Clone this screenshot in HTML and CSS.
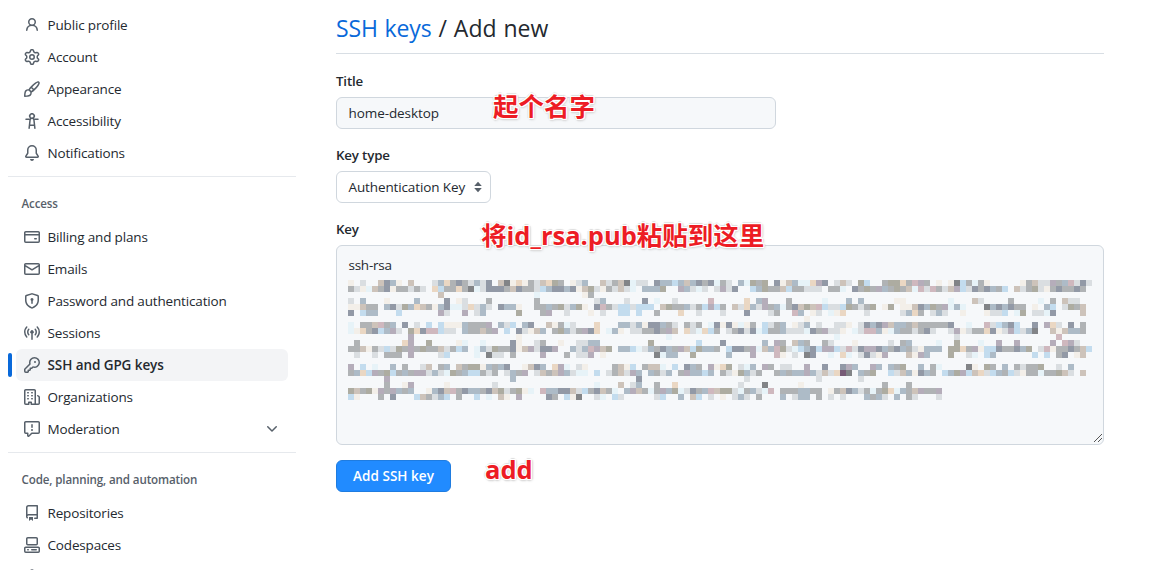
FILE: index.html
```html
<!DOCTYPE html>
<html lang="en">
<head>
<meta charset="utf-8">
<title>SSH keys</title>
<link rel="stylesheet" href="styles.css">
</head>
<body>
<div class="page">
<nav class="sidebar">
  <ul class="group">
    <li class="item"><svg class="icon" viewBox="0 0 16 16"><path d="M10.561 8.073a6.005 6.005 0 0 1 3.432 5.142.75.75 0 1 1-1.498.07 4.5 4.5 0 0 0-8.99 0 .75.75 0 0 1-1.498-.07 6.004 6.004 0 0 1 3.431-5.142 3.999 3.999 0 1 1 5.123 0ZM10.5 5a2.5 2.5 0 1 0-5 0 2.5 2.5 0 0 0 5 0Z"/></svg><span>Public profile</span></li>
    <li class="item"><svg class="icon" viewBox="0 0 16 16"><path d="M8 0a8.2 8.2 0 0 1 .701.031C9.444.095 9.99.645 10.16 1.29l.288 1.107c.018.066.079.158.212.224.231.114.454.243.668.386.123.082.233.09.299.071l1.103-.303c.644-.176 1.392.021 1.82.63.27.385.506.792.704 1.218.315.675.111 1.422-.364 1.891l-.814.806c-.049.048-.098.147-.088.294.016.257.016.515 0 .772-.01.147.038.246.088.294l.814.806c.475.469.679 1.216.364 1.891a7.977 7.977 0 0 1-.704 1.217c-.428.61-1.176.807-1.82.63l-1.102-.302c-.067-.019-.177-.011-.3.071a5.909 5.909 0 0 1-.668.386c-.133.066-.194.158-.211.224l-.29 1.106c-.168.646-.715 1.196-1.458 1.26a8.006 8.006 0 0 1-1.402 0c-.743-.064-1.289-.614-1.458-1.26l-.289-1.106c-.018-.066-.079-.158-.212-.224a5.738 5.738 0 0 1-.668-.386c-.123-.082-.233-.09-.299-.071l-1.103.303c-.644.176-1.392-.021-1.82-.63a8.12 8.12 0 0 1-.704-1.218c-.315-.675-.111-1.422.363-1.891l.815-.806c.05-.048.098-.147.088-.294a6.214 6.214 0 0 1 0-.772c.01-.147-.038-.246-.088-.294l-.815-.806C.635 6.045.431 5.298.746 4.623a7.92 7.92 0 0 1 .704-1.217c.428-.61 1.176-.807 1.82-.63l1.102.302c.067.019.177.011.3-.071.214-.143.437-.272.668-.386.133-.066.194-.158.211-.224l.29-1.106C6.009.645 6.556.095 7.299.03 7.53.01 7.764 0 8 0Zm-.571 1.525c-.036.003-.108.036-.137.146l-.289 1.105c-.147.561-.549.967-.998 1.189-.173.086-.34.183-.5.29-.417.278-.97.423-1.529.27l-1.103-.303c-.109-.03-.175.016-.195.045-.22.312-.412.644-.573.99-.014.031-.021.11.059.19l.815.806c.411.406.562.957.53 1.456a4.709 4.709 0 0 0 0 .582c.032.499-.119 1.05-.53 1.456l-.815.806c-.081.08-.073.159-.059.19.162.346.353.677.573.989.02.03.085.076.195.046l1.102-.303c.56-.153 1.113-.008 1.53.27.161.107.328.204.501.29.447.222.85.629.997 1.189l.289 1.105c.029.109.101.143.137.146a6.6 6.6 0 0 0 1.142 0c.036-.003.108-.036.137-.146l.289-1.105c.147-.561.549-.967.998-1.189.173-.086.34-.183.5-.29.417-.278.97-.423 1.529-.27l1.103.303c.109.029.175-.016.195-.045.22-.313.411-.644.573-.99.014-.031.021-.11-.059-.19l-.815-.806c-.411-.406-.562-.957-.53-1.456a4.709 4.709 0 0 0 0-.582c-.032-.499.119-1.05.53-1.456l.815-.806c.081-.08.073-.159.059-.19a6.464 6.464 0 0 0-.573-.989c-.02-.03-.085-.076-.195-.046l-1.102.303c-.56.153-1.113.008-1.53-.27a4.44 4.44 0 0 0-.501-.29c-.447-.222-.85-.629-.997-1.189l-.289-1.105c-.029-.11-.101-.143-.137-.146a6.6 6.6 0 0 0-1.142 0ZM11 8a3 3 0 1 1-6 0 3 3 0 0 1 6 0ZM9.5 8a1.5 1.5 0 1 0-3.001.001A1.5 1.5 0 0 0 9.5 8Z"/></svg><span>Account</span></li>
    <li class="item"><svg class="icon" viewBox="0 0 16 16"><path d="M11.134 1.535c.7-.509 1.416-.942 2.076-1.155.649-.21 1.463-.267 2.069.34.603.601.568 1.411.368 2.07-.202.668-.624 1.39-1.125 2.096-1.011 1.424-2.496 2.987-3.775 4.249-1.098 1.084-2.132 1.839-3.04 2.3a3.744 3.744 0 0 1-1.055 3.217c-.431.431-1.065.691-1.657.861-.614.177-1.294.287-1.914.357A21.151 21.151 0 0 1 .797 16H.743l.007-.75H.749L.742 16a.75.75 0 0 1-.743-.742l.743-.008-.742.007v-.054a21.25 21.25 0 0 1 .13-2.284c.067-.647.187-1.287.358-1.914.17-.591.43-1.226.86-1.657a3.746 3.746 0 0 1 3.227-1.054c.466-.893 1.225-1.907 2.314-2.982 1.271-1.255 2.833-2.75 4.245-3.777ZM1.62 13.089c-.051.464-.086.929-.104 1.395.466-.018.932-.053 1.396-.104a10.511 10.511 0 0 0 1.668-.309c.526-.151.856-.325 1.011-.48a2.25 2.25 0 1 0-3.182-3.182c-.155.155-.329.485-.48 1.01a10.515 10.515 0 0 0-.309 1.67Zm10.396-10.34c-1.224.89-2.605 2.189-3.822 3.384l1.718 1.718c1.21-1.205 2.51-2.597 3.387-3.833.47-.662.78-1.227.912-1.662.134-.444.032-.551.009-.575h-.001V1.78c-.014-.014-.113-.113-.548.027-.432.14-.995.462-1.655.942Zm-4.832 7.266-.001.001a9.859 9.859 0 0 0 1.63-1.142L7.155 7.216a9.7 9.7 0 0 0-1.161 1.607c.482.302.889.71 1.19 1.192Z"/></svg><span>Appearance</span></li>
    <li class="item"><svg class="icon" viewBox="0 0 16 16"><path d="M9.923 5.302c.063.063.122.129.178.198H14A.75.75 0 0 1 14 7h-3.3l.578 5.163.362 2.997a.75.75 0 0 1-1.49.18L9.868 13H6.132l-.282 2.34a.75.75 0 0 1-1.49-.18l.362-2.997L5.3 7H2a.75.75 0 0 1 0-1.5h3.9a2.54 2.54 0 0 1 .176-.198 3 3 0 1 1 3.847 0ZM9.2 7.073h-.001a1.206 1.206 0 0 0-2.398 0L6.305 11.5h3.39ZM9.5 3a1.5 1.5 0 1 0-3.001.001A1.5 1.5 0 0 0 9.5 3Z"/></svg><span>Accessibility</span></li>
    <li class="item"><svg class="icon" viewBox="0 0 16 16"><path d="M8 16a2 2 0 0 0 1.985-1.75c.017-.137-.097-.25-.235-.25h-3.5c-.138 0-.252.113-.235.25A2 2 0 0 0 8 16ZM3 5a5 5 0 0 1 10 0v2.947c0 .05.015.098.042.139l1.703 2.555A1.519 1.519 0 0 1 13.482 13H2.518a1.516 1.516 0 0 1-1.263-2.36l1.703-2.554A.255.255 0 0 0 3 7.947Zm5-3.5A3.5 3.5 0 0 0 4.5 5v2.947c0 .346-.102.683-.294.97l-1.703 2.556a.017.017 0 0 0-.003.01l.001.006c0 .002.002.004.004.006l.006.004.007.001h10.964l.007-.001.006-.004.004-.006.001-.007a.017.017 0 0 0-.003-.01l-1.703-2.554a1.745 1.745 0 0 1-.294-.97V5A3.5 3.5 0 0 0 8 1.5Z"/></svg><span>Notifications</span></li>
  </ul>
  <h3 class="heading">Access</h3>
  <ul class="group">
    <li class="item"><svg class="icon" viewBox="0 0 16 16"><path d="M10.75 9a.75.75 0 0 0 0 1.5h1.5a.75.75 0 0 0 0-1.5h-1.5Z"/><path d="M0 3.75C0 2.784.784 2 1.75 2h12.5c.966 0 1.75.784 1.75 1.75v8.5A1.75 1.75 0 0 1 14.25 14H1.75A1.75 1.75 0 0 1 0 12.25ZM14.5 6.5h-13v5.75c0 .138.112.25.25.25h12.5a.25.25 0 0 0 .25-.25Zm0-2.75a.25.25 0 0 0-.25-.25H1.75a.25.25 0 0 0-.25.25V5h13Z"/></svg><span>Billing and plans</span></li>
    <li class="item"><svg class="icon" viewBox="0 0 16 16"><path d="M1.75 2h12.5c.966 0 1.75.784 1.75 1.75v8.5A1.75 1.75 0 0 1 14.25 14H1.75A1.75 1.75 0 0 1 0 12.25v-8.5C0 2.784.784 2 1.75 2ZM1.5 12.251c0 .138.112.25.25.25h12.5a.25.25 0 0 0 .25-.25V5.809L8.38 9.397a.75.75 0 0 1-.76 0L1.5 5.809v6.442Zm13-8.181v-.32a.25.25 0 0 0-.25-.25H1.75a.25.25 0 0 0-.25.25v.32L8 7.88Z"/></svg><span>Emails</span></li>
    <li class="item"><svg class="icon" viewBox="0 0 16 16"><path d="m8.533.133 5.25 1.68A1.75 1.75 0 0 1 15 3.48V7c0 1.566-.32 3.182-1.303 4.682-.983 1.498-2.585 2.813-5.032 3.855a1.697 1.697 0 0 1-1.33 0c-2.447-1.042-4.049-2.357-5.032-3.855C1.32 10.182 1 8.566 1 7V3.48a1.755 1.755 0 0 1 1.217-1.667l5.25-1.68a1.748 1.748 0 0 1 1.066 0Zm-.61 1.429.001.001-5.25 1.68a.251.251 0 0 0-.174.237V7c0 1.36.275 2.666 1.057 3.859.784 1.194 2.121 2.342 4.366 3.298a.196.196 0 0 0 .154 0c2.245-.957 3.582-2.103 4.366-3.297C13.225 9.666 13.5 8.358 13.5 7V3.48a.25.25 0 0 0-.174-.238l-5.25-1.68a.25.25 0 0 0-.153 0ZM9.5 6.5c0 .536-.286 1.032-.75 1.3v2.45a.75.75 0 0 1-1.5 0V7.8A1.5 1.5 0 1 1 9.5 6.5Z"/></svg><span>Password and authentication</span></li>
    <li class="item"><svg class="icon" viewBox="0 0 16 16"><path d="M8.75 8.582v5.668a.75.75 0 0 1-1.5 0V8.582a1.75 1.75 0 1 1 1.5 0Zm3.983-7.125a.75.75 0 0 1 1.06.026A7.976 7.976 0 0 1 16 7c0 2.139-.84 4.083-2.207 5.517a.75.75 0 1 1-1.086-1.034A6.474 6.474 0 0 0 14.5 7a6.474 6.474 0 0 0-1.793-4.483.75.75 0 0 1 .026-1.06Zm-9.466 0c.3.286.312.76.026 1.06A6.474 6.474 0 0 0 1.5 7a6.47 6.47 0 0 0 1.793 4.483.75.75 0 0 1-1.086 1.034A7.973 7.973 0 0 1 0 7c0-2.139.84-4.083 2.207-5.517a.75.75 0 0 1 1.06-.026Zm8.556 2.321A4.988 4.988 0 0 1 13 7a4.988 4.988 0 0 1-1.177 3.222.75.75 0 1 1-1.146-.967A3.487 3.487 0 0 0 11.5 7c0-.86-.309-1.645-.823-2.255a.75.75 0 0 1 1.146-.967Zm-6.492.958A3.48 3.48 0 0 0 4.5 7a3.48 3.48 0 0 0 .823 2.255.75.75 0 0 1-1.146.967A4.981 4.981 0 0 1 3 7a4.982 4.982 0 0 1 1.188-3.236.75.75 0 1 1 1.143.972Z"/></svg><span>Sessions</span></li>
    <li class="item selected"><svg class="icon" viewBox="0 0 16 16"><path d="M10.5 0a5.499 5.499 0 1 1-1.288 10.848l-.932.932a.749.749 0 0 1-.53.22H7v.75a.749.749 0 0 1-.22.53l-.5.5a.749.749 0 0 1-.53.22H5v.75a.749.749 0 0 1-.22.53l-.5.5a.749.749 0 0 1-.53.22h-2A1.75 1.75 0 0 1 0 14.25v-2c0-.199.079-.389.22-.53l4.932-4.932A5.5 5.5 0 0 1 10.5 0Zm-4 5.5c-.001.431.069.86.205 1.269a.75.75 0 0 1-.181.768L1.5 12.56v1.69c0 .138.112.25.25.25h1.69l.06-.06v-1.19a.75.75 0 0 1 .75-.75h1.19l.06-.06v-1.19a.75.75 0 0 1 .75-.75h1.19l1.023-1.025a.75.75 0 0 1 .768-.18A4 4 0 1 0 6.5 5.5ZM11 6a1 1 0 1 1 0-2 1 1 0 0 1 0 2Z"/></svg><span>SSH and GPG keys</span></li>
    <li class="item"><svg class="icon" viewBox="0 0 16 16"><path d="M1.75 16A1.75 1.75 0 0 1 0 14.25V1.75C0 .784.784 0 1.75 0h8.5C11.216 0 12 .784 12 1.75v12.5c0 .085-.006.168-.018.25h2.268a.25.25 0 0 0 .25-.25V8.285a.25.25 0 0 0-.111-.208l-1.055-.703a.749.749 0 1 1 .832-1.248l1.055.703c.487.325.779.871.779 1.456v5.965A1.75 1.75 0 0 1 14.25 16h-3.5a.766.766 0 0 1-.197-.026c-.099.017-.2.026-.303.026h-3a.75.75 0 0 1-.75-.75V14h-1v1.25a.75.75 0 0 1-.75.75Zm-.25-1.75c0 .138.112.25.25.25H4v-1.25a.75.75 0 0 1 .75-.75h2.5a.75.75 0 0 1 .75.75v1.25h2.25a.25.25 0 0 0 .25-.25V1.75a.25.25 0 0 0-.25-.25h-8.5a.25.25 0 0 0-.25.25ZM3.75 6h.5a.75.75 0 0 1 0 1.5h-.5a.75.75 0 0 1 0-1.5ZM3 3.75A.75.75 0 0 1 3.75 3h.5a.75.75 0 0 1 0 1.5h-.5A.75.75 0 0 1 3 3.75Zm4 3A.75.75 0 0 1 7.75 6h.5a.75.75 0 0 1 0 1.5h-.5A.75.75 0 0 1 7 6.75ZM7.75 3h.5a.75.75 0 0 1 0 1.5h-.5a.75.75 0 0 1 0-1.5ZM3 9.75A.75.75 0 0 1 3.75 9h.5a.75.75 0 0 1 0 1.5h-.5A.75.75 0 0 1 3 9.75ZM7.75 9h.5a.75.75 0 0 1 0 1.5h-.5a.75.75 0 0 1 0-1.5Z"/></svg><span>Organizations</span></li>
    <li class="item"><svg class="icon" viewBox="0 0 16 16"><path d="M0 1.75C0 .784.784 0 1.75 0h12.5C15.216 0 16 .784 16 1.75v9.5A1.75 1.75 0 0 1 14.25 13H8.06l-2.573 2.573A1.458 1.458 0 0 1 3 14.543V13H1.75A1.75 1.75 0 0 1 0 11.25Zm1.75-.25a.25.25 0 0 0-.25.25v9.5c0 .138.112.25.25.25h2a.75.75 0 0 1 .75.75v2.19l2.72-2.72a.749.749 0 0 1 .53-.22h6.5a.25.25 0 0 0 .25-.25v-9.5a.25.25 0 0 0-.25-.25Zm7 2.25v2.5a.75.75 0 0 1-1.5 0v-2.5a.75.75 0 0 1 1.5 0ZM9 9a1 1 0 1 1-2 0 1 1 0 0 1 2 0Z"/></svg><span>Moderation</span><svg class="icon chevron" viewBox="0 0 16 16"><path d="M12.78 5.22a.749.749 0 0 1 0 1.06l-4.25 4.25a.749.749 0 0 1-1.06 0L3.22 6.28a.749.749 0 1 1 1.06-1.06L8 8.939l3.72-3.719a.749.749 0 0 1 1.06 0Z"/></svg></li>
  </ul>
  <h3 class="heading">Code, planning, and automation</h3>
  <ul class="group">
    <li class="item"><svg class="icon" viewBox="0 0 16 16"><path d="M2 2.5A2.5 2.5 0 0 1 4.5 0h8.75a.75.75 0 0 1 .75.75v12.5a.75.75 0 0 1-.75.75h-2.5a.75.75 0 0 1 0-1.5h1.75v-2h-8a1 1 0 0 0-.714 1.7.75.75 0 1 1-1.072 1.05A2.495 2.495 0 0 1 2 11.5Zm10.5-1h-8a1 1 0 0 0-1 1v6.708A2.486 2.486 0 0 1 4.5 9h8ZM5 12.25a.25.25 0 0 1 .25-.25h3.5a.25.25 0 0 1 .25.25v3.25a.25.25 0 0 1-.4.2l-1.45-1.087a.249.249 0 0 0-.3 0L5.4 15.7a.25.25 0 0 1-.4-.2Z"/></svg><span>Repositories</span></li>
    <li class="item"><svg class="icon" viewBox="0 0 16 16"><path d="M0 11.25c0-.966.784-1.75 1.75-1.75h12.5c.966 0 1.75.784 1.75 1.75v3A1.75 1.75 0 0 1 14.25 16H1.75A1.75 1.75 0 0 1 0 14.25Zm2-9.5C2 .784 2.784 0 3.75 0h8.5C13.216 0 14 .784 14 1.75v5a1.75 1.75 0 0 1-1.75 1.75h-8.5A1.75 1.75 0 0 1 2 6.75Zm1.75-.25a.25.25 0 0 0-.25.25v5c0 .138.112.25.25.25h8.5a.25.25 0 0 0 .25-.25v-5a.25.25 0 0 0-.25-.25Zm-2 9.5a.25.25 0 0 0-.25.25v3c0 .138.112.25.25.25h12.5a.25.25 0 0 0 .25-.25v-3a.25.25 0 0 0-.25-.25Z"/><path d="M7 12.75a.75.75 0 0 1 .75-.75h4.5a.75.75 0 0 1 0 1.5h-4.5a.75.75 0 0 1-.75-.75Zm-4 0a.75.75 0 0 1 .75-.75h.5a.75.75 0 0 1 0 1.5h-.5a.75.75 0 0 1-.75-.75Z"/></svg><span>Codespaces</span></li>
    <li class="item"><svg class="icon" viewBox="0 0 16 16"><path d="m8.878.392 5.25 3.045c.54.314.872.89.872 1.514v6.098a1.75 1.75 0 0 1-.872 1.514l-5.25 3.045a1.75 1.75 0 0 1-1.756 0l-5.25-3.045A1.75 1.75 0 0 1 1 11.049V4.951c0-.624.332-1.201.872-1.514L7.122.392a1.75 1.75 0 0 1 1.756 0Z"/></svg></li>
  </ul>
</nav>
<main class="content">
  <h2 class="title"><a class="link">SSH keys</a> / Add new</h2>
  <label class="label">Title</label>
  <div class="input"><span>home-desktop</span><span class="note note-name">起个名字</span></div>
  <label class="label">Key type</label>
  <div class="select"><span>Authentication Key</span><svg class="arrows" viewBox="0 0 8 12"><path d="M.2 5 4 .8 7.8 5zM.2 7h7.6L4 11.2z"/></svg></div>
  <label class="label">Key</label>
  <div class="textarea"><span class="key-text">ssh-rsa</span>
    <svg class="mosaic" id="mosaic" viewBox="0 0 744 120" shape-rendering="crispEdges"></svg>
    <svg class="grip" viewBox="0 0 9 9" shape-rendering="crispEdges"><path d="M.5 8.5l8-8M4.5 8.5l4-4"/></svg>
    <span class="note note-key">将id_rsa.pub粘贴到这里</span></div>
  <div class="actions"><span class="button">Add SSH key</span><span class="note-add">add</span></div>
</main>
</div>
<script src="mosaic.js"></script>
</body>
</html>
```
FILE: styles.css
```css
* { box-sizing: border-box; }
body { margin: 0; background: #fff; color: #24292f; font: 13.5px/20px "Open Sans", "Noto Sans", sans-serif; letter-spacing: -0.08px; }
.page { display: flex; gap: 40px; height: 570px; padding: 0 46px 0 8px; overflow: hidden; }
.sidebar { flex: 0 0 288px; padding-top: 9px; }
.group { list-style: none; margin: 0; padding: 0 8px; }
.item { position: relative; display: flex; align-items: center; gap: 7.5px; height: 32px; padding: 0 8px; border-radius: 6px; letter-spacing: -0.16px; }
.icon { width: 16px; height: 16px; flex: none; fill: #57606a; }
.chevron { margin-left: auto; }
.selected { background: #f3f4f6; font-weight: 600; letter-spacing: -0.08px; }
.selected::before { content: ""; position: absolute; left: -8px; top: 4px; width: 4px; height: 24px; border-radius: 6px; background: #0969da; }
.heading { margin: 7px 0 0; height: 45px; padding: 18px 13.5px 0; border-top: 1px solid #e6e9ed; color: #57606a; font-size: 11.6px; line-height: 18px; font-weight: 600; letter-spacing: -0.13px; }
.content { flex: 1; }
.title { margin: 0 0 17px; height: 54px; padding-top: 10px; border-bottom: 1px solid #d8dee4; font-size: 23px; line-height: 36px; font-weight: 400; letter-spacing: 0; word-spacing: 1px; }
.link { color: #0969da; letter-spacing: -0.15px; }
.label { display: block; height: 20px; margin: 0 0 6px; font-weight: 600; font-size: 13.3px; letter-spacing: -0.15px; }
.input, .select, .textarea { position: relative; border: 1px solid #d0d7de; border-radius: 6px; background: #f6f8fa; padding: 5px 11.5px; }
.input { width: 440px; height: 32px; margin-bottom: 16px; }
.select { display: flex; align-items: center; justify-content: space-between; width: 155px; height: 32px; padding: 0 8px 0 11.5px; margin-bottom: 16px; background: #fff; letter-spacing: -0.12px; }
.arrows { width: 8px; height: 12px; fill: #57606a; }
.textarea { height: 200px; padding: 9px 11px; }
.key-text { display: block; height: 25px; padding-left: 0.5px; letter-spacing: -0.25px; }
.mosaic { display: block; width: 744px; height: 120px; }
.grip { position: absolute; right: 1px; bottom: 1px; width: 9px; height: 9px; fill: none; stroke: #555; stroke-width: 1; }
.note, .note-add { color: #ed1c24; font: 700 25.5px/34px "Open Sans", "Noto Sans CJK SC", sans-serif; letter-spacing: 0; white-space: nowrap; text-shadow: 1px 0 #fff, -1px 0 #fff, 0 1px #fff, 0 -1px #fff, 1px 1px #fff, -1px -1px #fff, 1px -1px #fff, -1px 1px #fff, 2px 0 1px #ddd, -2px 0 1px #ddd, 0 2px 1px #ddd, 0 -2px 1px #ddd, 1px 1px 3px #aaa; }
.note { position: absolute; }
.note-name { left: 156px; top: -9px; }
.note-key { left: 144px; top: -28px; }
.actions { display: flex; margin-top: 15px; gap: 34px; }
.button { width: 115px; height: 32px; border: 1px solid #1f7ce0; border-radius: 6px; background: #218bff; color: #fff; font-weight: 600; line-height: 30px; text-align: center; letter-spacing: 0.04px; }
.note-add { margin-top: -8px; }
```
FILE: mosaic.js
```js
const colors = {
  g: '#b0b3b5', d: '#9299a6', l: '#dadee1', b: '#c3dcee', s: '#adbbc7', p: '#b5adba',
  t: '#cdc3ba', w: '#f3efe9', o: '#ead7c3', c: '#e7f3f8', k: '#828487', y: '#adaca1',
  r: '#cfb8be', m: '#775b76'
};
// Each row is four runs covering columns 0-28, 29-61, 62-93 and 94-123.
const starts = [0, 29, 62, 94];
const rows = [
  ['w.l..tdsw.t...lsogdglsld.tkwo', 'wgltoyg.wls..tlgtkcll.dssbstsdgdc', 'gl.scygy.dwtsccopd.ltl.yb..gyyog', 'rpg.w.wkbgcgw.....wgtllpgsrldl'],
  ['glwctgdwgglgl.obggogkcldddgtd', 'gglbsddsdwtylwgltlc.sssy..pslcl.l', 'pld..bsyggtbgglll.ggc.dgygpsgygt', 'crlrgltpbldgdsgb.tlgylwgdggdg.'],
  ['...............t', '..c.......wg', '', ''],
  ['l.s...w....s....d.wl...g', '..g.........ls...l..d.c..l.....r', '....o.sp...g.....c...s.s.....ww', '......c...tl....g....c.g.tll'],
  ['wwtgg.sdlysotgwsdcclolsl.dssw', '..ggsgylsyw.drglbblbbb.tyggslgbpb', 'g.tloslpgscgdtytrbllbyglgy.wy.ww', 'tdsygpcsc...ksdsdgg.w.sb.lygt'],
  ['d.bss...b......pl..p.ls.....y', '...gp..l...w.l..bb.b..g...o..l', 'l...d...lg..rs.wl.cwo...l.....ls', 'og.lsl..w...wllb.cy.llcd....t'],
  ['', '', '..............w', ''],
  ['c.ggtrgs.d.l.b.bwwwsgggp.slb', 'sd..twgcl...o...sslswddsgl.glg.cd', 'wdwcwg.blgs.wls.l..llw.ldsdptssg', 'tgggggd..c..rlbsdb..d.pol.d.g'],
  ['cwogdbspl.yodrrbll.sggtgp.b.d', 'lwts.gyslgpdo.csw.llggdgpt.olcobg', '.lgdldcbggslllcdgpllw.clrrswcsgg', 'lgdl..lpwlggodwlpblsk..twtssg'],
  ['..........p.................w', '........................c', '...................c', '.......l................r'],
  ['.g.......op..y....wc..c....dw', '..lg..w..llss........y.......b', 'd......s.pg.tsg..gl...w.....l.gs', '....c..y...c..p..p.....p.rpl'],
  ['ggtwglblygpgyggtlgbs.cslyggdw', 'tplddp..slsrpty.ssbclsgdsgptbyssg', '.bddgpctsrylcbsdbppblrldppdsgdsg', 'lwsss.yyogpwbbdggdsy.lrwggdgtb'],
  ['.l..l.ggg.p....lb....c.kll.g', '...p...g.llp.w........kcss..y', '.s...p...rw.l.kd..c.oc.ldlwp...t', 'wps...y..lc.bs......b.b.gd.wt'],
  ['', '', '', ''],
  ['p.b.c..s.g..lt.gs.tgyywsgsd', 'wtds.opc.lw....gtwb.gttc.b.dsg.pw', 'oy.lcs.pg.ll..p..d..dps..ps.sgy', '.s.gc....kw.yg.s.glggy..l.s'],
  ['gsobpgybgsgpplslcygsbbglg.lsg', 'p.ltgtpslcc.b.lgtlps.sgls.gpssbs.', 'glwyslg..gsgsspsltlomk.sgy..blts', 'wdsg.bsypbtolbsgblwggcggytl.t'],
  ['......p....................s', '...................d', '....l...........l......l', ''],
  ['......g..wp.....w.......l', '............c...t.ls..g..o', '...l...k.....w.............g...g', ''],
  ['ytgywpgpsgs..wsdtrgdssgdtylgy', 'wc.rssddtlbgdtgc.sptgcgpsycldgsrt', 'yylcgslcr.gggssgg.wgtdslgcgyocsg', 'tpggp'],
  ['bw...g.d...btglsb.g..b.c.tw.p', '....dg.bwk..lc.bl.....lb..s.tb.l', 'w.lsl.g...s.lss.g.l.l...sgsl.s.g', 'l...l']
];
const mosaic = document.getElementById('mosaic');
rows.forEach((runs, y) => runs.forEach((run, i) => [...run].forEach((key, x) => {
  if (!colors[key]) return;
  const cell = document.createElementNS('http://www.w3.org/2000/svg', 'rect');
  cell.setAttribute('x', (starts[i] + x) * 6);
  cell.setAttribute('y', y * 6);
  cell.setAttribute('width', 6);
  cell.setAttribute('height', 6);
  cell.setAttribute('fill', colors[key]);
  mosaic.appendChild(cell);
})));
```
